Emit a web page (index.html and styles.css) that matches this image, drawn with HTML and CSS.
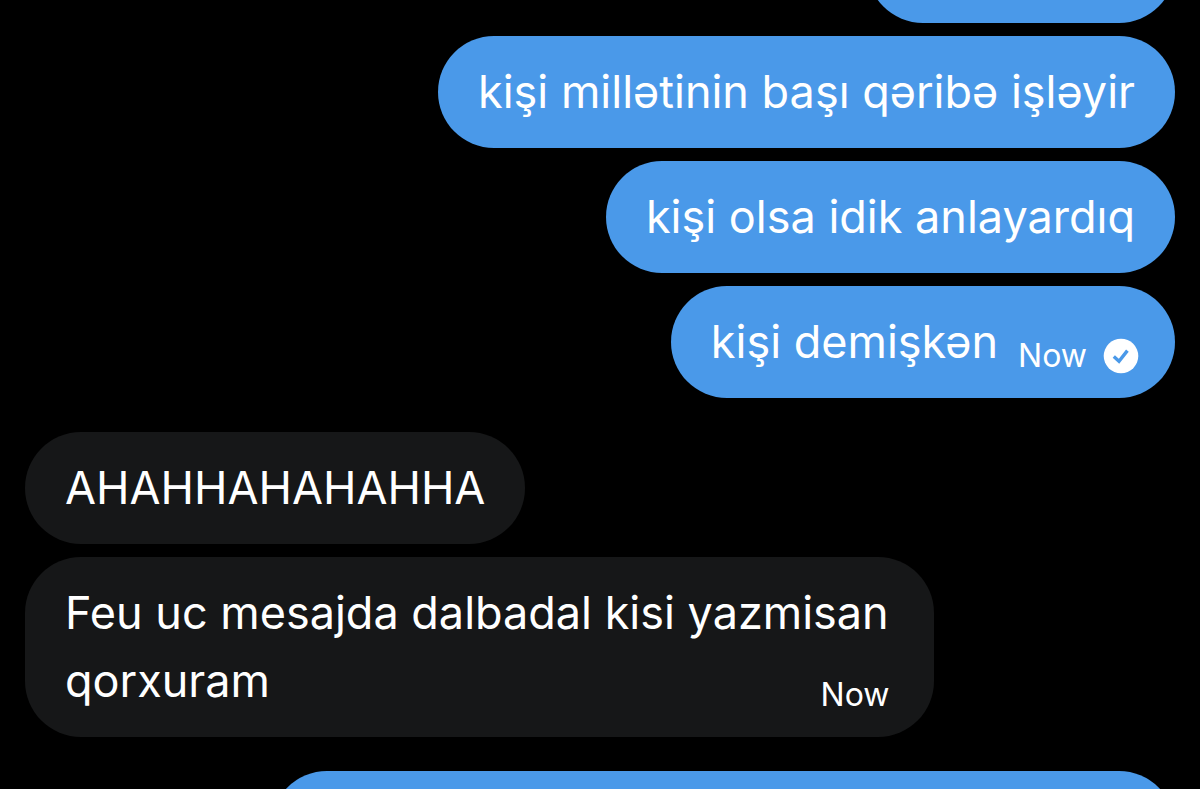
FILE: index.html
```html
<!DOCTYPE html>
<html lang="az">
<head>
<meta charset="utf-8">
<meta name="viewport" content="width=device-width, initial-scale=1">
<title>Messages</title>
<link rel="stylesheet" href="styles.css">
</head>
<body>
<main class="thread">
  <div class="group sent">
    <div class="bubble clipped-top"></div>
    <div class="bubble"><p class="text">kişi millətinin başı qəribə işləyir</p></div>
    <div class="bubble"><p class="text">kişi olsa idik anlayardıq</p></div>
    <div class="bubble with-status">
      <p class="text">kişi demişkən</p>
      <span class="meta">Now
        <svg class="check" viewBox="0 0 36 36" role="img" aria-label="Sent"><circle cx="18" cy="18" r="17.3" fill="#fff"/><path d="M10.8 18.6l5.2 4.6 8.4-10.6" fill="none" stroke="#4a99e9" stroke-width="3.4"/></svg>
      </span>
    </div>
  </div>
  <div class="group received">
    <div class="bubble"><p class="text">AHAHHAHAHAHHA</p></div>
    <div class="bubble long"><p class="text">Feu uc mesajda dalbadal kisi yazmisan qorxuram<span class="meta">Now</span></p></div>
  </div>
  <div class="group sent">
    <div class="bubble clipped-bottom"></div>
  </div>
</main>
</body>
</html>
```
FILE: styles.css
```css
* { box-sizing: border-box; }
body {
  margin: 0;
  background: #000;
  color: #fff;
  font-family: Inter, "Noto Sans", sans-serif;
}
.thread {
  display: flex;
  flex-direction: column;
  gap: 34px;
  height: 100vh;
  overflow: hidden;
  padding: 0 25px;
}
.group {
  display: flex;
  flex-direction: column;
  flex-shrink: 0;
  gap: 13px;
}
.sent { align-items: flex-end; }
.received { align-items: flex-start; }
.bubble {
  display: flex;
  align-items: flex-end;
  gap: 20px;
  min-height: 112px;
  padding: 22px 40px;
  border-radius: 56px;
}
.sent .bubble { background: #4a99e9; }
.received .bubble { background: #161718; }
.sent .with-status { padding-right: 36px; }
.text {
  margin: 0;
  font-size: 45px;
  line-height: 68px;
}
.meta {
  display: flex;
  align-items: center;
  gap: 16px;
  font-size: 32px;
  line-height: 40px;
}
.check { width: 36px; height: 36px; }
.long {
  display: block;
  width: 79%;
  padding-right: 28px;
}
.long .meta {
  float: right;
  margin: 28px 16px 0 0;
}
.clipped-top { width: 308px; margin-top: -89px; }
.clipped-bottom { width: 904px; }
```
